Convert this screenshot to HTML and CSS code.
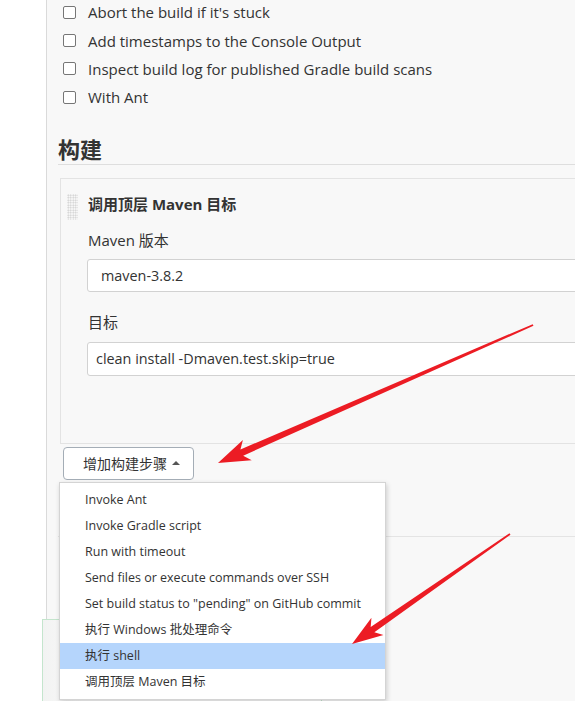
FILE: index.html
```html
<!DOCTYPE html>
<html lang="zh-CN">
<head>
<meta charset="utf-8">
<title>构建</title>
<link rel="stylesheet" href="styles.css">
</head>
<body>
<div class="page">
  <div class="gutter"></div>
  <div class="main">
    <ul class="options">
      <li class="option"><span class="check"></span><span>Abort the build if it's stuck</span></li>
      <li class="option"><span class="check"></span><span>Add timestamps to the Console Output</span></li>
      <li class="option"><span class="check"></span><span>Inspect build log for published Gradle build scans</span></li>
      <li class="option"><span class="check"></span><span>With Ant</span></li>
    </ul>
    <section class="build">
      <h2 class="section-title">构建</h2>
      <div class="step">
        <div class="step-head"><span class="grip"></span><span class="step-title">调用顶层 Maven 目标</span></div>
        <div class="field-label">Maven 版本</div>
        <div class="input select">maven-3.8.2</div>
        <div class="field-label">目标</div>
        <div class="input">clean install -Dmaven.test.skip=true</div>
      </div>
      <div class="add-wrap">
        <button class="add-btn">增加构建步骤<span class="caret"></span></button>
        <ul class="menu">
          <li class="menu-item">Invoke Ant</li>
          <li class="menu-item">Invoke Gradle script</li>
          <li class="menu-item">Run with timeout</li>
          <li class="menu-item">Send files or execute commands over SSH</li>
          <li class="menu-item">Set build status to "pending" on GitHub commit</li>
          <li class="menu-item">执行 Windows 批处理命令</li>
          <li class="menu-item active">执行 shell</li>
          <li class="menu-item">调用顶层 Maven 目标</li>
        </ul>
      </div>
      <div class="next-rule"></div>
    </section>
  </div>
  <div class="bottom-bar"></div>
  <svg class="arrows" width="575" height="701" viewBox="0 0 575 701">
    <g transform="translate(218 463) rotate(-23.66)">
      <polygon points="0,0 32,-11 26,-3.4 344,-0.9 344,0.9 26,3.4 32,11" fill="#ec1c24"/>
    </g>
    <g transform="translate(352 644) rotate(-34.85)">
      <polygon points="0,0 31,-10.5 25,-3.2 192.5,-0.9 192.5,0.9 25,3.2 31,10.5" fill="#ec1c24"/>
    </g>
  </svg>
</div>
</body>
</html>
```
FILE: styles.css
```css
html, body {
  margin: 0;
  padding: 0;
  background: #ffffff;
  overflow: hidden;
}
body {
  font-family: "Open Sans", "Noto Sans CJK SC", sans-serif;
  color: #333333;
  font-size: 15px;
}
.page {
  position: relative;
  display: flex;
  width: 575px;
  height: 701px;
  overflow: hidden;
}
.gutter {
  width: 46px;
  flex: none;
  background: #ffffff;
}
.main {
  flex: 1;
  min-width: 0;
  background: #f8f8f8;
  border-left: 1px solid #dadada;
}
.options {
  list-style: none;
  margin: -2px 0 0;
  padding: 0 0 0 16px;
}
.option {
  display: flex;
  align-items: center;
  gap: 12px;
  height: 28.4px;
  font-size: 15px;
  white-space: nowrap;
}
.check {
  width: 13px;
  height: 13px;
  box-sizing: border-box;
  border: 1px solid #767676;
  border-radius: 2px;
  background: #ffffff;
  flex: none;
}
.build {
  margin-left: 11px;
}
.section-title {
  margin: 23px 0 0;
  padding: 0 0 1px;
  font-size: 22px;
  line-height: 28px;
  font-weight: 700;
  color: #333;
  border-bottom: 1px solid #dedede;
}
.step {
  margin: 13px -30px 0 2px;
  padding: 15px 0 67px;
  border: 1px solid #e3e3e3;
  background: #f8f8f8;
}
.step-head {
  display: flex;
  align-items: flex-start;
  padding-left: 6px;
  gap: 10px;
}
.grip {
  width: 11px;
  height: 26px;
  background-image: radial-gradient(circle, #cdcdcd 0.75px, transparent 0.95px);
  background-size: 2.5px 2.5px;
}
.step-title {
  margin-top: 0;
  font-weight: 700;
  font-size: 15px;
  line-height: 21px;
}
.field-label {
  margin: 10px 0 0 27px;
  font-size: 15px;
  line-height: 20px;
}
.input {
  box-sizing: border-box;
  height: 34px;
  margin: 10px 0 0 26px;
  padding: 0 8px;
  display: flex;
  align-items: center;
  background: #ffffff;
  border: 1px solid #d2d2d2;
  border-radius: 3px;
  font-size: 14.4px;
  white-space: nowrap;
}
.input.select {
  height: 33px;
  margin-top: 9px;
  padding-left: 13px;
}
.input.select + .field-label {
  margin-top: 20px;
}
.add-wrap {
  position: relative;
  margin: 3px 0 0 5px;
  width: 131px;
}
.add-btn {
  box-sizing: border-box;
  width: 131px;
  height: 33px;
  padding: 0 0 0 19px;
  display: flex;
  align-items: center;
  gap: 5px;
  background: #ffffff;
  border: 1px solid #a4adb6;
  border-radius: 4px;
  font-family: "Open Sans", "Noto Sans CJK SC", sans-serif;
  font-size: 14px;
  color: #333;
}
.caret {
  width: 0;
  height: 0;
  border-left: 4px solid transparent;
  border-right: 4px solid transparent;
  border-bottom: 4px solid #555;
}
.menu {
  position: absolute;
  top: calc(100% + 2px);
  left: -4px;
  width: 327px;
  box-sizing: border-box;
  margin: 0;
  padding: 4px 0;
  list-style: none;
  background: #ffffff;
  border: 1px solid #d4d4d4;
  box-shadow: 1px 2px 5px rgba(0, 0, 0, 0.18);
  z-index: 3;
}
.menu-item {
  height: 26px;
  line-height: 26px;
  padding-left: 25px;
  font-size: 12.5px;
  white-space: nowrap;
  color: #333;
}
.menu-item.active {
  background: #b5d5fc;
}
.next-rule {
  margin-top: 56px;
  border-top: 1px solid #e4e4e4;
}
.bottom-bar {
  position: absolute;
  left: 42px;
  top: 619px;
  width: 280px;
  height: 120px;
  box-sizing: border-box;
  border: 1px solid #c4e5cd;
  background: linear-gradient(90deg, #f2f3f2 0, #f6f6f6 20px, #f8f8f8 40px);
  z-index: 2;
}
.arrows {
  position: absolute;
  left: 0;
  top: 0;
  pointer-events: none;
  z-index: 5;
}
```
